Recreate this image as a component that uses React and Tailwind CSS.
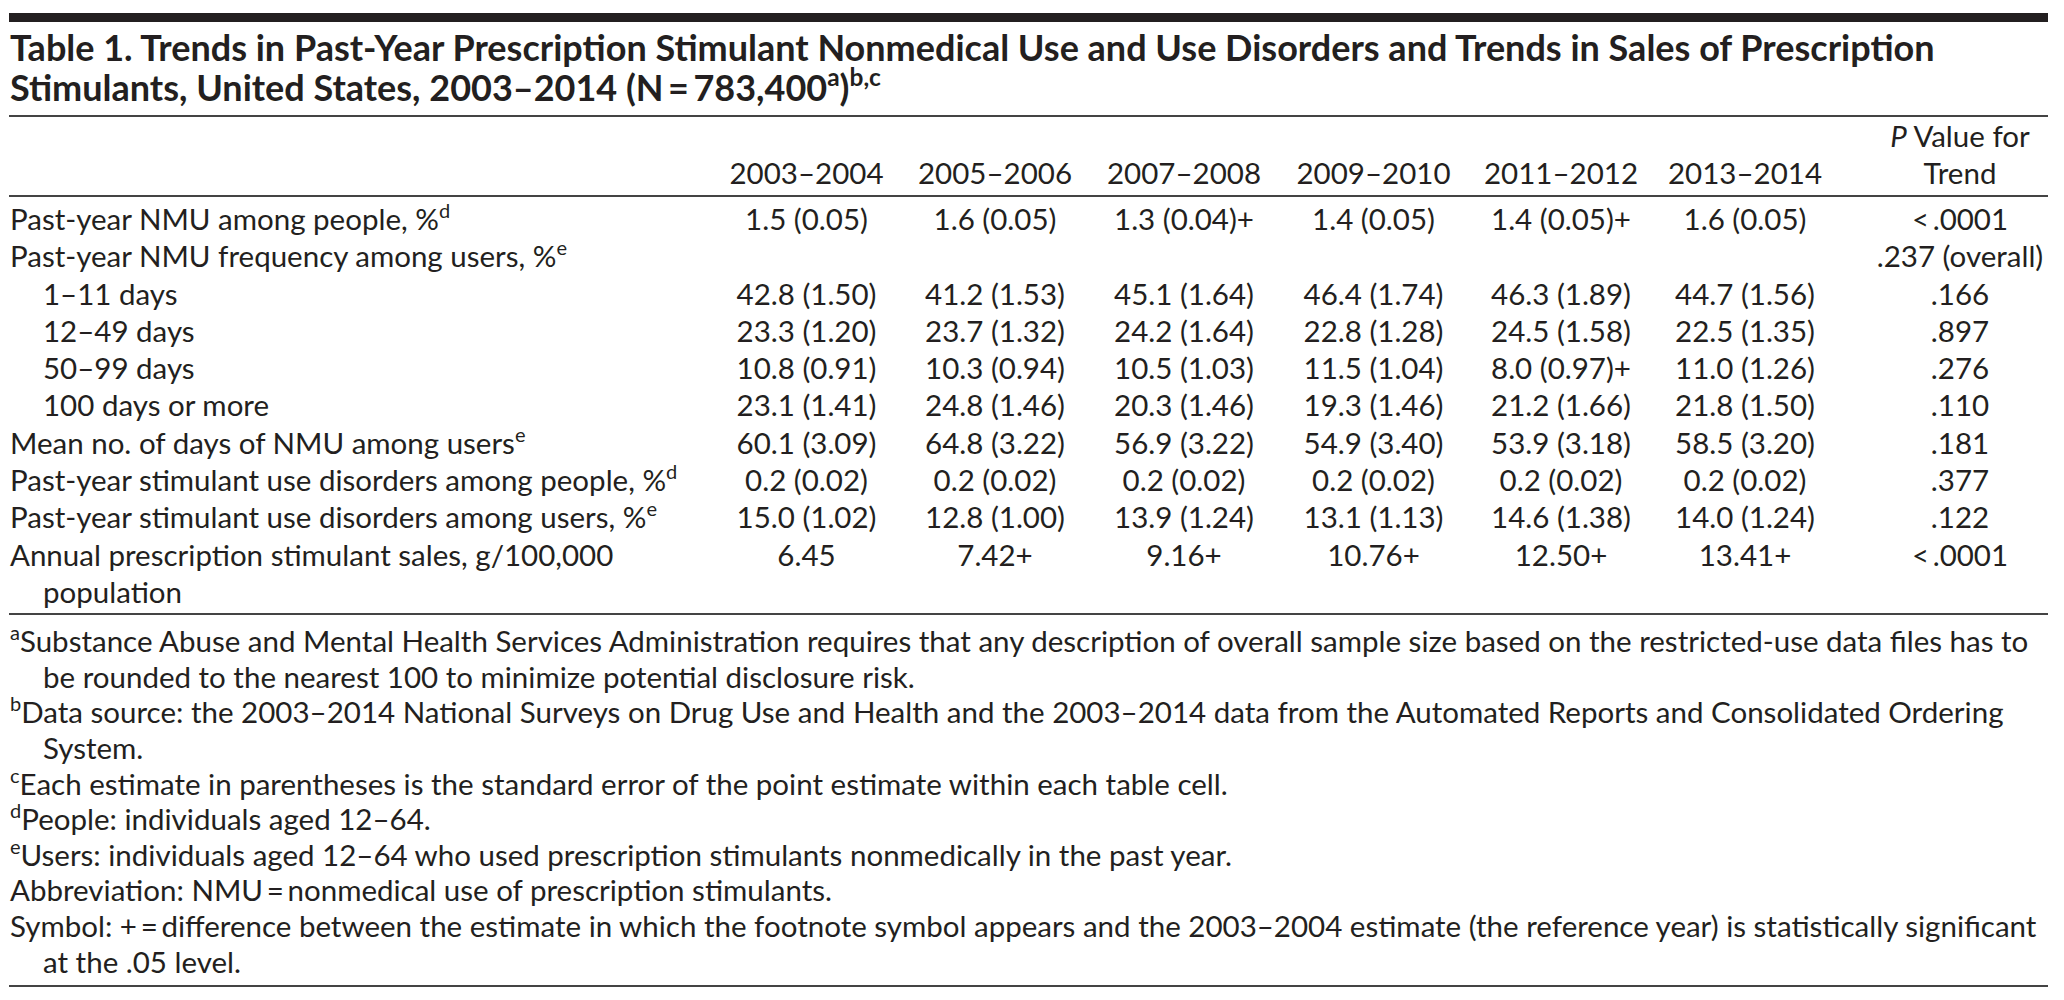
import React from "react";

const years = ["2003–2004", "2005–2006", "2007–2008", "2009–2010", "2011–2012", "2013–2014"];

const rows = [
  {
    label: "Past-year NMU among people, %",
    sup: "d",
    vals: ["1.5 (0.05)", "1.6 (0.05)", "1.3 (0.04)+", "1.4 (0.05)", "1.4 (0.05)+", "1.6 (0.05)"],
    p: "<\u2009.0001",
  },
  {
    label: "Past-year NMU frequency among users, %",
    sup: "e",
    vals: ["", "", "", "", "", ""],
    p: ".237 (overall)",
  },
  {
    label: "1–11 days",
    indent: true,
    vals: ["42.8 (1.50)", "41.2 (1.53)", "45.1 (1.64)", "46.4 (1.74)", "46.3 (1.89)", "44.7 (1.56)"],
    p: ".166",
  },
  {
    label: "12–49 days",
    indent: true,
    vals: ["23.3 (1.20)", "23.7 (1.32)", "24.2 (1.64)", "22.8 (1.28)", "24.5 (1.58)", "22.5 (1.35)"],
    p: ".897",
  },
  {
    label: "50–99 days",
    indent: true,
    vals: ["10.8 (0.91)", "10.3 (0.94)", "10.5 (1.03)", "11.5 (1.04)", "8.0 (0.97)+", "11.0 (1.26)"],
    p: ".276",
  },
  {
    label: "100 days or more",
    indent: true,
    vals: ["23.1 (1.41)", "24.8 (1.46)", "20.3 (1.46)", "19.3 (1.46)", "21.2 (1.66)", "21.8 (1.50)"],
    p: ".110",
  },
  {
    label: "Mean no. of days of NMU among users",
    sup: "e",
    vals: ["60.1 (3.09)", "64.8 (3.22)", "56.9 (3.22)", "54.9 (3.40)", "53.9 (3.18)", "58.5 (3.20)"],
    p: ".181",
  },
  {
    label: "Past-year stimulant use disorders among people, %",
    sup: "d",
    vals: ["0.2 (0.02)", "0.2 (0.02)", "0.2 (0.02)", "0.2 (0.02)", "0.2 (0.02)", "0.2 (0.02)"],
    p: ".377",
  },
  {
    label: "Past-year stimulant use disorders among users, %",
    sup: "e",
    vals: ["15.0 (1.02)", "12.8 (1.00)", "13.9 (1.24)", "13.1 (1.13)", "14.6 (1.38)", "14.0 (1.24)"],
    p: ".122",
  },
  {
    label: "Annual prescription stimulant sales, g/100,000",
    wrap: "population",
    vals: ["6.45", "7.42+", "9.16+", "10.76+", "12.50+", "13.41+"],
    p: "<\u2009.0001",
  },
];

const notes = [
  {
    sup: "a",
    text: "Substance Abuse and Mental Health Services Administration requires that any description of overall sample size based on the restricted-use data files has to",
    more: "be rounded to the nearest 100 to minimize potential disclosure risk.",
  },
  {
    sup: "b",
    text: "Data source: the 2003–2014 National Surveys on Drug Use and Health and the 2003–2014 data from the Automated Reports and Consolidated Ordering",
    more: "System.",
  },
  { sup: "c", text: "Each estimate in parentheses is the standard error of the point estimate within each table cell." },
  { sup: "d", text: "People: individuals aged 12–64." },
  { sup: "e", text: "Users: individuals aged 12–64 who used prescription stimulants nonmedically in the past year." },
  { text: "Abbreviation: NMU\u2009=\u2009nonmedical use of prescription stimulants." },
  {
    text: "Symbol: +\u2009=\u2009difference between the estimate in which the footnote symbol appears and the 2003–2004 estimate (the reference year) is statistically significant",
    more: "at the .05 level.",
  },
];

// superscript footnote marks, sized relative to the surrounding text
const Sup = ({ children }) => (
  <sup className="text-[0.68em] top-[-0.6em]">{children}</sup>
);

export default function App() {
  return (
    <div className="w-[2064px] bg-white pt-[13px] pl-[9px] pb-[13px] font-['Lato','Open_Sans',sans-serif] text-[#231f20]">
      <div className="w-[2039px]">
        {/* heavy top rule */}
        <div className="h-[9px] bg-[#231f20]" />

        <h1 className="mt-[5px] pb-[8px] border-b-2 border-[#444] text-[36px] leading-[40px] font-bold pl-[1px]">
          Table 1. Trends in Past-Year Prescription Stimulant Nonmedical Use and Use Disorders and Trends in Sales of Prescription
          <br />
          Stimulants, United States, 2003–2014 (N{"\u2009=\u2009"}783,400<Sup>a</Sup>)<Sup>b,c</Sup>
        </h1>

        <table className="table-fixed border-collapse w-[2039px] text-[29.5px]">
          <colgroup>
            <col className="w-[703px]" />
            <col className="w-[189px]" />
            <col className="w-[188px]" />
            <col className="w-[190px]" />
            <col className="w-[189px]" />
            <col className="w-[186px]" />
            <col className="w-[182px]" />
            <col className="w-[212px]" />
          </colgroup>
          <thead>
            <tr className="border-b-2 border-[#444]">
              <th className="p-0" />
              {years.map((y) => (
                <th key={y} className="p-0 pb-[4px] align-bottom text-center font-normal leading-[37px] whitespace-nowrap">
                  {y}
                </th>
              ))}
              <th className="p-0 pb-[4px] pl-[36px] align-bottom text-center font-normal leading-[37px] whitespace-nowrap">
                <i>P</i> Value for
                <br />
                Trend
              </th>
            </tr>
          </thead>
          <tbody className="border-b-2 border-[#444]">
            {rows.map((r, i) => {
              const edge =
                i === 0 ? "pt-[3px]" : i === rows.length - 1 ? "pb-[3px]" : "";
              return (
                <tr key={i} className="align-top leading-[37.3px]">
                  <td className={`p-0 ${edge} ${r.indent ? "pl-[34px]" : "pl-[1px]"}`}>
                    {r.label}
                    {r.sup && <Sup>{r.sup}</Sup>}
                    {r.wrap && (
                      <div className="pl-[33px]">{r.wrap}</div>
                    )}
                  </td>
                  {r.vals.map((v, j) => (
                    <td key={j} className={`p-0 ${edge} text-center whitespace-nowrap`}>
                      {v}
                    </td>
                  ))}
                  <td className={`p-0 ${edge} pl-[36px] text-center whitespace-nowrap`}>{r.p}</td>
                </tr>
              );
            })}
          </tbody>
        </table>

        <div className="pt-[8px] pb-[6px] border-b-2 border-[#444] text-[29.5px] leading-[35.6px]">
          {notes.map((n, i) => (
            <div key={i} className="pl-[1px]">
              <div className="whitespace-nowrap">
                {n.sup && <Sup>{n.sup}</Sup>}
                {n.text}
              </div>
              {n.more && <div className="pl-[33px]">{n.more}</div>}
            </div>
          ))}
        </div>
      </div>
    </div>
  );
}
